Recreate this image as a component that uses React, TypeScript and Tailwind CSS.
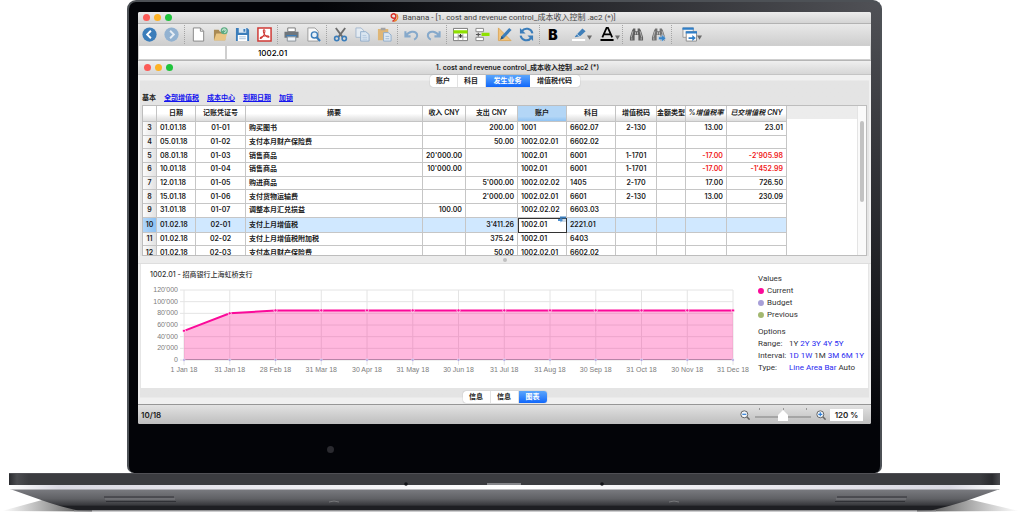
import React from 'react';

type Row = {
  no: number;
  date: string;
  doc: string;
  text: string;
  income?: string;
  expense?: string;
  account: string;
  category: string;
  vat?: string;
  rate?: string;
  posted?: string;
};

const rows: Row[] = [
  { no: 3, date: '01.01.18', doc: '01-01', text: '购买图书', expense: '200.00', account: '1001', category: '6602.07', vat: '2-130', rate: '13.00', posted: '23.01' },
  { no: 4, date: '05.01.18', doc: '01-02', text: '支付本月财产保险费', expense: '50.00', account: '1002.02.01', category: '6602.02' },
  { no: 5, date: '08.01.18', doc: '01-03', text: '销售商品', income: "20'000.00", account: '1002.01', category: '6001', vat: '1-1701', rate: '-17.00', posted: "-2'905.98" },
  { no: 6, date: '10.01.18', doc: '01-04', text: '销售商品', income: "10'000.00", account: '1002.01', category: '6001', vat: '1-1701', rate: '-17.00', posted: "-1'452.99" },
  { no: 7, date: '12.01.18', doc: '01-05', text: '购进商品', expense: "5'000.00", account: '1002.02.02', category: '1405', vat: '2-170', rate: '17.00', posted: '726.50' },
  { no: 8, date: '15.01.18', doc: '01-06', text: '支付货物运输费', expense: "2'000.00", account: '1002.02.01', category: '6601', vat: '2-130', rate: '13.00', posted: '230.09' },
  { no: 9, date: '31.01.18', doc: '01-07', text: '调整本月汇兑损益', income: '100.00', account: '1002.02.02', category: '6603.03' },
  { no: 10, date: '01.02.18', doc: '02-01', text: '支付上月增值税', expense: "3'411.26", account: '1002.01', category: '2221.01' },
  { no: 11, date: '01.02.18', doc: '02-02', text: '支付上月增值税附加税', expense: '375.24', account: '1002.01', category: '6403' },
  { no: 12, date: '01.02.18', doc: '02-03', text: '支付本月财产保险费', expense: '50.00', account: '1002.02.01', category: '6602.02' },
];

function Icon({ children }: { children: React.ReactNode }) {
  return (
    <svg viewBox="0 0 16 16" className="h-[15px] w-[15px] shrink-0" fill="none" aria-hidden="true">
      {children}
    </svg>
  );
}

function Tool({ label, children }: { label: string; children: React.ReactNode }) {
  return (
    <button type="button" aria-label={label} className="flex w-[22px] shrink-0 items-center justify-center">
      <Icon>{children}</Icon>
    </button>
  );
}

function MenuTool({ label, children }: { label: string; children: React.ReactNode }) {
  return (
    <button type="button" aria-label={label} className="flex w-[28px] shrink-0 items-center justify-end">
      <Icon>{children}</Icon>
      <svg viewBox="0 0 5 5" className="mt-[6px] h-[5px] w-[5px]" aria-hidden="true">
        <path d="M0 .5h5L2.500 4.800z" fill="#6b6b6b" />
      </svg>
    </button>
  );
}

function Separator() {
  return (
    <span className="flex w-[5px] shrink-0 justify-center py-px">
      <span className="border-l border-dotted border-[#a4a4a4]" />
    </span>
  );
}

function Lights() {
  return (
    <div className="flex flex-1 gap-[4px] pl-[5px]">
      <span className="h-[7px] w-[7px] rounded-full bg-[#fc5b57]" />
      <span className="h-[7px] w-[7px] rounded-full bg-[#fdb225]" />
      <span className="h-[7px] w-[7px] rounded-full bg-[#1fc43c]" />
    </div>
  );
}

const binoculars = (
  <>
    <path d="M4.500 1.500h2.300v3h2.400v-3h2.300l1.200 2.200 2.300 7.300v3.500h-5V8.500H6v6H1V11l2.300-7.300z" fill="#5f5f5f" />
    <path d="M4.200 4.500L2.500 11M11.800 4.500l1.700 6.500M3 11.200v2.500M13 11.200v2.500" stroke="#c9c9c9" strokeWidth=".8" />
    <path d="M7 5.500v2.500M9 5.500v2.500" stroke="#dcdcdc" strokeWidth=".8" />
  </>
);

function Toolbar() {
  return (
    <div className="flex h-[21px] items-stretch overflow-hidden bg-linear-to-b from-[#e9e9e9] to-[#cecece]">
      <Tool label="Back">
        <circle cx="8" cy="8" r="7.600" fill="#3b7dba" />
        <path d="M9.500 4L5.500 8l4 4" stroke="#fff" strokeWidth="2" />
      </Tool>
      <Tool label="Forward">
        <circle cx="8" cy="8" r="7.600" fill="#92b2d1" />
        <path d="M6.500 4l4 4-4 4" stroke="#e6edf4" strokeWidth="2" />
      </Tool>
      <Separator />
      <Tool label="New">
        <path d="M2.500 1h7.500l3.500 3.500V15h-11z" fill="#fff" stroke="#858585" />
        <path d="M10 1v3.500h3.500" stroke="#858585" />
      </Tool>
      <Tool label="Open">
        <path d="M1 14V3h5l1.500 2H13v9z" fill="#a98a55" />
        <path d="M1 14.500L3.500 7H15l-2 7.500z" fill="#e9c583" />
        <circle cx="12" cy="4" r="3.800" fill="#5cab82" />
        <path d="M10 4a2 2 0 1 1 2 2M12 4V2.500" stroke="#dff3e8" />
      </Tool>
      <Tool label="Save">
        <path d="M1 1h12l2 2v12H1z" fill="#3b7dba" />
        <path d="M4 1h8v5H4z" fill="#dbe7f2" />
        <path d="M9 2h2v3H9z" fill="#3b7dba" />
        <path d="M3 8.500h10V15H3z" fill="#fff" />
        <path d="M4.500 10.500h7M4.500 12.500h7" stroke="#9fbedb" />
      </Tool>
      <Tool label="PDF">
        <path d="M1 1h14v14H1z" fill="#fff" stroke="#cf3a36" strokeWidth="1.600" />
        <path d="M7.500 3c1.800 0 .8 4-.9 6.500C5.200 11.800 3.500 13 3.300 12c-.2-1.400 4.200-2.700 7.200-2.600 2.800.1 2.900 1.900 1.300 1.600C9.500 10.500 6.500 6.500 6.700 4c0-.6.300-1 .8-1z" stroke="#cf3a36" strokeWidth="1.100" />
      </Tool>
      <Separator />
      <Tool label="Print">
        <path d="M4 1h8v4H4z" fill="#fff" stroke="#777" />
        <path d="M.5 5h15v6.500H.5z" fill="#6f757b" />
        <path d="M2.500 8.500h11v2h-11z" fill="#3b7dba" />
        <path d="M3.500 10.500h9V15h-9z" fill="#eef3f8" stroke="#8b9299" />
      </Tool>
      <Tool label="Preview">
        <path d="M2 1h7.500L13 4.500V15H2z" fill="#f8f8f8" stroke="#9b9b9b" />
        <circle cx="9" cy="8.500" r="3.300" fill="#e8f1f9" stroke="#3b7dba" strokeWidth="1.500" />
        <path d="M11.300 11l3.700 4" stroke="#3b7dba" strokeWidth="2.200" />
      </Tool>
      <Separator />
      <Tool label="Cut">
        <path d="M3 1l7.500 10M13 1L5.500 11" stroke="#6d6d6d" strokeWidth="2" />
        <circle cx="4" cy="12.300" r="2.300" stroke="#3b7dba" strokeWidth="1.700" />
        <circle cx="12" cy="12.300" r="2.300" stroke="#3b7dba" strokeWidth="1.700" />
      </Tool>
      <Tool label="Copy">
        <path d="M1 1h5.500L9 3.500V11H1z" fill="#e4ebf2" stroke="#a3b8cd" />
        <path d="M6 5h5.500L15 8v7H6z" fill="#dbe6f1" stroke="#8fadcb" />
        <path d="M8 9h4M8 11h5M8 13h5" stroke="#a9c2da" strokeWidth=".8" />
      </Tool>
      <Tool label="Paste">
        <path d="M1 2h11v12H1z" fill="#dfb676" />
        <path d="M4 .8h5v2.700H4z" fill="#a3a3a3" />
        <path d="M7 6h5l3 2.500V15H7z" fill="#dfe9f3" stroke="#8fadcb" />
        <path d="M9 10h4M9 12.500h4" stroke="#8fadcb" strokeWidth=".8" />
      </Tool>
      <Separator />
      <Tool label="Undo">
        <path d="M1.500 4.500V10H7M2 9.500c3-5 10-6 11.800-2 .8 2.500-.8 5-3 6" stroke="#86a9cb" strokeWidth="2.200" />
      </Tool>
      <Tool label="Redo">
        <path d="M14.500 4.500V10H9M14 9.500c-3-5-10-6-11.800-2-.8 2.500.8 5 3 6" stroke="#86a9cb" strokeWidth="2.200" />
      </Tool>
      <Separator />
      <Tool label="Insert row">
        <path d="M.5 1.500h15v13H.5z" fill="#fff" stroke="#777" />
        <path d="M.5 3.500h15V7H.5z" fill="#8ee000" />
        <path d="M.5 10.800h15M5.500 7v7.500M10.500 7v7.500" stroke="#999" strokeWidth=".8" />
        <path d="M8 7.500v4M6 9.500h4" stroke="#333" strokeWidth="1.300" />
      </Tool>
      <Tool label="Append row">
        <path d="M1 1.500h8v3.500H1zM1 11h8v3.500H1z" fill="#fff" stroke="#888" />
        <path d="M7 6h8.500v3.500H7z" fill="#8ee000" />
        <path d="M1 8h5M3.500 6v4" stroke="#555" strokeWidth="1.200" />
      </Tool>
      <Tool label="Check">
        <path d="M1.500 1v13.500H15z" fill="#efc37e" stroke="#dca75a" />
        <path d="M4 13l1-3.500L13 1l2.500 2.300-8 8.500z" fill="#3b7dba" />
        <path d="M3.500 13.500l1.300-3.800 2.400 2.200z" fill="#23527e" />
      </Tool>
      <Tool label="Recalculate">
        <path d="M14.300 6.800A6.300 6.300 0 0 0 3 4.500M1.700 9.200A6.300 6.300 0 0 0 13 11.500" stroke="#3b7dba" strokeWidth="2.200" />
        <path d="M1 1V7H7zM15 15V9H9z" fill="#3b7dba" />
      </Tool>
      <Separator />
      <button type="button" className="w-[22px] shrink-0 text-center text-[14px] leading-[21px] font-black text-black">B</button>
      <MenuTool label="Highlight colour">
        <path d="M3 10.500l2.500-3L11 1.500l3.500 3L9 9.500l-5.500 1.500z" fill="#3f7fb9" />
        <path d="M5 7.500l3.500 2.800" stroke="#bcd2e6" />
        <path d="M0 12.700h14V15H0z" fill="#fff" />
      </MenuTool>
      <MenuTool label="Text colour">
        <path d="M2.500 11L7 1h1.500L13 11M4.500 7.800h6.500" stroke="#000" strokeWidth="1.900" />
        <path d="M.5 12.800h14V15H.5z" fill="#000" />
      </MenuTool>
      <Separator />
      <Tool label="Find">{binoculars}</Tool>
      <Tool label="Find next">
        <g opacity=".85">{binoculars}</g>
        <path d="M8 10.500h3.500V8l4.500 4-4.500 4v-2.500H8z" fill="#3c86c8" stroke="#e8f1f9" strokeWidth=".5" />
      </Tool>
      <Separator />
      <MenuTool label="Windows">
        <path d="M1 1h11v10H1z" fill="#f4f4f4" stroke="#9a9a9a" />
        <path d="M.5 .5h12v2.500H.5z" fill="#2f7fc9" />
        <path d="M4.500 5h11v10h-11z" fill="#fff" stroke="#8a8a8a" />
        <path d="M4 4.500h12V7H4z" fill="#2f7fc9" />
        <path d="M7 10.800h4V8.600l3.700 3.200-3.700 3.200v-2.200H7z" fill="#2f7fc9" />
      </MenuTool>
    </div>
  );
}

function Tabs({ items, active }: { items: { label: string; width: string }[]; active: number }) {
  return (
    <div role="tablist" className="flex h-[12px] overflow-hidden rounded-[3px] bg-white shadow-[0_0_1px_#888]">
      {items.map((t, i) => (
        <button
          key={i}
          type="button"
          role="tab"
          aria-selected={i === active}
          className={
            t.width +
            ' text-[7px] leading-[12px] font-bold ' +
            (i === active
              ? 'bg-linear-to-b from-[#5aa5fb] to-[#0f66fa] text-white'
              : 'border-r border-[#e2e2e2] text-[#222] last:border-r-0')
          }
        >
          {t.label}
        </button>
      ))}
    </div>
  );
}

const head =
  'border-r border-b border-[#c4c4c4] bg-linear-to-b from-white from-50% to-[#dcdcdc] p-0 pb-[2px] text-center font-semibold';
const cell = 'border-r border-b border-[#c6c6c6] p-0 px-[3px] ';

function Ledger() {
  return (
    <div className="mx-[2px] flex h-[151px] overflow-hidden border border-[#bdbdbd] bg-white">
      <div className="h-[154px] min-w-0 flex-1">
        <table className="h-[154px] w-full table-fixed border-separate border-spacing-0 text-[7px] leading-[12px] font-semibold whitespace-nowrap text-[#1a1a1a]">
          <colgroup>
            <col className="w-[14px]" />
            <col className="w-[39px]" />
            <col className="w-[50px]" />
            <col className="w-[177px]" />
            <col className="w-[43px]" />
            <col className="w-[52px]" />
            <col className="w-[49px]" />
            <col className="w-[49px]" />
            <col className="w-[41px]" />
            <col className="w-[29px]" />
            <col className="w-[41px]" />
            <col className="w-[60px]" />
            <col />
          </colgroup>
          <thead>
            <tr className="h-[16px]">
              <th className={head} aria-label="#" />
              <th className={head}>日期</th>
              <th className={head}>记账凭证号</th>
              <th className={head}>摘要</th>
              <th className={head}>收入 CNY</th>
              <th className={head}>支出 CNY</th>
              <th className="border-r border-b border-[#c4c4c4] bg-linear-to-b from-[#b3d6f6] from-70% to-[#8fc3f3] p-0 pb-[2px] text-center font-semibold">账户</th>
              <th className={head}>科目</th>
              <th className={head}>增值税码</th>
              <th className={head}>金额类型</th>
              <th className={head + ' italic'}>%增值税率</th>
              <th className={head + ' italic'}>已交增值税 CNY</th>
              <th className="bg-linear-to-b from-[#ececec] from-80% to-white to-80% p-0" aria-label="Filler" />
            </tr>
          </thead>
          <tbody>
            {rows.map((r) => {
              const sel = r.no === 10;
              const red = r.rate?.startsWith('-') ? 'text-[#f01818] ' : '';
              return (
                <tr key={r.no} className={sel ? 'bg-[#d0e8ff]' : ''}>
                  <th
                    scope="row"
                    className={
                      cell +
                      'text-center font-semibold ' +
                      (sel ? 'bg-linear-to-r from-[#b0d5f8] to-[#8cc2f4]' : 'bg-linear-to-r from-[#fbfbfb] to-[#e2e2e2]')
                    }
                  >
                    <span className="-mx-[3px] block">{r.no}</span>
                  </th>
                  <td className={cell}>{r.date}</td>
                  <td className={cell + 'text-center'}>{r.doc}</td>
                  <td className={cell}>{r.text}</td>
                  <td className={cell + 'text-right'}>{r.income}</td>
                  <td className={cell + 'text-right'}>{r.expense}</td>
                  <td className={sel ? 'relative border border-[#333] bg-white p-0 px-[2px]' : cell}>
                    {r.account}
                    {sel && (
                      <svg viewBox="0 0 8 7" className="absolute -top-[3px] right-0 h-[7px] w-[8px]" aria-hidden="true">
                        <path d="M2 .5h6v2H2z" fill="#3b7dba" />
                        <path d="M4 3h4v3H4z" fill="#cfdbe6" />
                        <path d="M0 3h2.500V1.500L5 4 2.500 6.500V5H0z" fill="#4b8fd0" />
                      </svg>
                    )}
                  </td>
                  <td className={cell}>{r.category}</td>
                  <td className={cell + 'text-center'}>{r.vat}</td>
                  <td className={cell} />
                  <td className={cell + red + 'text-right'}>{r.rate}</td>
                  <td className={cell + red + 'text-right'}>{r.posted}</td>
                  <td className="bg-white p-0" />
                </tr>
              );
            })}
          </tbody>
        </table>
      </div>
      <div className="w-[9px] shrink-0 border-l border-[#e4e4e4] bg-[#fafafa] px-[2px] pt-[15px]">
        <div className="h-[81px] rounded-full bg-[#c2c2c2]" />
      </div>
    </div>
  );
}

const months = ['1 Jan 18', '31 Jan 18', '28 Feb 18', '31 Mar 18', '30 Apr 18', '31 May 18', '30 Jun 18', '31 Jul 18', '31 Aug 18', '30 Sep 18', '31 Oct 18', '30 Nov 18', '31 Dec 18'];
const values = [50, 80, 85, 85, 85, 85, 85, 85, 85, 85, 85, 85, 85];
const ticks = ["0", "20'000", "40'000", "60'000", "80'000", "100'000", "120'000"];
const px = (i: number) => 43 + (i * 549) / 12;
const py = (v: number) => 80 - (v * 70) / 120;
const line = values.map((v, i) => `${px(i)},${py(v)}`).join(' ');

function Chart() {
  return (
    <svg viewBox="0 0 609 104" className="block w-full overflow-visible" role="img" aria-label="Account balance">
      <g stroke="#e4e4e4" strokeWidth="1">
        {ticks.map((t, i) => (
          <line key={t} x1="39" x2="592" y1={py(i * 20)} y2={py(i * 20)} />
        ))}
        {months.map((m, i) => (
          <line key={m} x1={px(i)} x2={px(i)} y1="10" y2="85" />
        ))}
      </g>
      <polygon points={`43,80 ${line} 592,80`} fill="#ff1493" fillOpacity=".3" />
      <line x1="43" x2="592" y1="79.500" y2="79.500" stroke="#b884a8" strokeWidth="1.200" />
      <polyline points={line} fill="none" stroke="#fb0a9a" strokeWidth="2" />
      {values.map((v, i) => (
        <g key={i}>
          <circle cx={px(i)} cy={py(v)} r="1.600" fill="#fb0a9a" stroke="#fff" strokeWidth=".7" />
          <circle cx={px(i)} cy="80" r="1.200" fill="#a49ae0" stroke="#fff" strokeWidth=".4" />
        </g>
      ))}
      <g fill="#7c7c7c" fontFamily="Liberation Sans, sans-serif" fontSize="7">
        {ticks.map((t, i) => (
          <text key={t} x="37" y={py(i * 20) + 2} textAnchor="end">{t}</text>
        ))}
        {months.map((m, i) => (
          <text key={m} x={px(i)} y="92" textAnchor="middle">{m}</text>
        ))}
      </g>
    </svg>
  );
}

function Option({ label, items, current }: { label: string; items: string[]; current: string }) {
  return (
    <div className="flex">
      <span className="w-[31px] shrink-0">{label}</span>
      <span className="flex gap-[2px]">
        {items.map((o) =>
          o === current ? (
            <span key={o}>{o}</span>
          ) : (
            <a key={o} href="#chart" className="text-[#2a2af0]">{o}</a>
          ),
        )}
      </span>
    </div>
  );
}

function Legend({ color, name }: { color: string; name: string }) {
  return (
    <div className="flex items-center gap-[3px]">
      <span className={'h-[6px] w-[6px] rounded-full ' + color} />
      {name}
    </div>
  );
}

function Glass({ plus }: { plus?: boolean }) {
  return (
    <svg viewBox="0 0 10 10" className="h-[10px] w-[10px]" fill="none" aria-hidden="true">
      <circle cx="4.300" cy="4.300" r="3.500" fill="#f2f6fa" stroke="#666" />
      <path d="M6.800 6.800l2.800 2.800" stroke="#666" strokeWidth="1.500" />
      <path d={plus ? 'M2.300 4.300h4M4.300 2.300v4' : 'M2.300 4.300h4'} stroke="#2f7fd6" strokeWidth="1.200" />
    </svg>
  );
}

function Base() {
  return (
    <svg viewBox="0 0 1022 41" preserveAspectRatio="none" className="block h-[41px] w-full" aria-hidden="true">
      <defs>
        <linearGradient id="under" x1="0" y1="0" x2="0" y2="1">
          <stop offset="0" stopColor="#7b7c81" />
          <stop offset=".45" stopColor="#606165" />
          <stop offset=".75" stopColor="#37383c" />
          <stop offset=".8" stopColor="#1e1f23" />
          <stop offset="1" stopColor="#1e1f23" />
        </linearGradient>
        <linearGradient id="stripe">
          <stop offset="0" stopColor="#fff" />
          <stop offset=".05" stopColor="#d9d8e2" />
          <stop offset=".5" stopColor="#fff" />
          <stop offset=".95" stopColor="#d9d8e2" />
          <stop offset="1" stopColor="#fff" />
        </linearGradient>
        <linearGradient id="deck">
          <stop offset="0" stopColor="#2a2b2f" />
          <stop offset=".008" stopColor="#4b4c50" />
          <stop offset=".02" stopColor="#3b3c40" />
          <stop offset=".98" stopColor="#3b3c40" />
          <stop offset=".992" stopColor="#2a2b2f" />
          <stop offset="1" stopColor="#4b4c50" />
        </linearGradient>
        <linearGradient id="shadeL">
          <stop offset="0" stopColor="#555" stopOpacity="0" />
          <stop offset="1" stopColor="#333" stopOpacity=".95" />
        </linearGradient>
        <linearGradient id="shadeR" x1="1" x2="0">
          <stop offset="0" stopColor="#555" stopOpacity="0" />
          <stop offset="1" stopColor="#333" stopOpacity=".95" />
        </linearGradient>
      </defs>
      <path d="M2 38L42 27l50 3v8.500z" fill="url(#shadeL)" />
      <path d="M1019 38L972 27l-55 3v8.500z" fill="url(#shadeR)" />
      <path d="M10 16L44 28Q58 33 78 37.500H931Q950 33 966 28L1000 16z" fill="url(#under)" />
      <path d="M74 38h862" stroke="#9a9a9d" />
      <path d="M9 0H1000V12H9z" fill="url(#deck)" />
      <path d="M9 .5H1000" stroke="#55565a" strokeWidth=".8" />
      <path d="M9 12H1000V15L998 16.500H11L9 15z" fill="url(#stripe)" />
      <path d="M487 10h34v2h-34z" fill="#85868a" />
      <circle cx="406" cy="11" r="1.800" fill="#111216" />
      <circle cx="602" cy="11" r="1.800" fill="#111216" />
      <path d="M104 24h70M106 28.500h70M837 24h70M835 28.500h70" stroke="#303136" strokeWidth="1.200" />
      <path d="M105 26h70M836 26h70" stroke="#85868b" strokeWidth=".8" />
      <path d="M329 29q5-2 10 0M669 29q5-2 10 0" stroke="#77777a" fill="none" />
    </svg>
  );
}

export default function App() {
  return (
    <main className="w-full bg-white font-['Inter','Noto_Sans_CJK_SC',sans-serif] text-[7px]">
      <div className="pr-[140px] pl-[127px]">
        <div className="rounded-t-[9px] rounded-b-[7px] border-x-2 border-t-2 border-[#4d5156] bg-[radial-gradient(ellipse_75%_90%_at_100%_0%,#505156,#030408)] px-[9px] pt-[10px]">
          <div className="overflow-hidden rounded-[2px] bg-[#f0f0f0]">
            <header className="flex h-[12px] items-center border-b border-[#b2b2b2] bg-linear-to-b from-[#ececec] to-[#d4d4d4]">
              <Lights />
              <div className="flex items-center gap-[3px] font-['Roboto','Noto_Sans_CJK_SC',sans-serif] text-[8px] leading-[11px] whitespace-nowrap text-[#444]">
                <svg viewBox="0 0 9 9" className="h-[9px] w-[9px]" fill="none" aria-hidden="true">
                  <path d="M5.500 4.500C4 6 1.200 5 1.200 3S4 0 5.300 1.500 5.500 7 2.500 8.500" stroke="#d8342c" strokeWidth="1.500" />
                  <path d="M6.500 1c2.500 3 1 6.500-2.500 7.300" stroke="#e8862c" strokeWidth="1.200" />
                </svg>
                Banana - [1. cost and revenue control_成本收入控制 .ac2 (*)]
              </div>
              <div className="flex-1 pr-[8px]" />
            </header>
            <Toolbar />
            <div className="flex h-[16px] gap-[2px] border-b border-[#b5b5b5] bg-[#cfcfcf] px-px pt-px pb-px">
              <input aria-label="Cell name" className="w-[86px] shrink-0 bg-white" />
              <input aria-label="Cell value" defaultValue="1002.01" className="min-w-0 flex-1 bg-white pl-[31px] text-[8px] font-medium text-black" />
            </div>
            <div className="flex h-[14px] items-center border-b border-[#c4c4c4] bg-linear-to-b from-[#efefef] to-[#d6d6d6] pl-px">
              <Lights />
              <h1 className="pl-[20px] text-[7px] leading-[12px] font-semibold whitespace-nowrap text-[#1c1c1c]">
                1. cost and revenue control_成本收入控制 .ac2 (*)
              </h1>
              <div className="flex-1" />
            </div>
            <section className="mx-[2px] bg-linear-to-b from-[#f0f0f0] from-[5px] to-[#e4e4e4] to-[6px]">
              <div className="flex h-[12px] justify-center">
                <Tabs
                  active={2}
                  items={[
                    { label: '账户', width: 'w-[28px]' },
                    { label: '科目', width: 'w-[28px]' },
                    { label: '发生业务', width: 'w-[44px]' },
                    { label: '增值税代码', width: 'w-[50px]' },
                  ]}
                />
              </div>
              <nav className="flex h-[18px] items-center gap-[8px] pt-[4px] pl-[2px] font-semibold">
                <span className="text-[#222]">基本</span>
                <a href="#vat" className="text-[#1414ee] underline">全部增值税</a>
                <a href="#centres" className="text-[#1414ee] underline">成本中心</a>
                <a href="#due" className="text-[#1414ee] underline">到期日期</a>
                <a href="#lock" className="text-[#1414ee] underline">加锁</a>
              </nav>
              <Ledger />
            </section>
            <div className="flex h-[8px] items-center justify-center border-b border-[#dedede] bg-[#ececec]">
              <span className="h-[4px] w-[4px] rounded-full bg-[#c0c0c0]" />
            </div>
            <section id="chart" className="mx-[2px] flex min-h-[124px] border-x border-[#e6e6e6] bg-white text-[#333]">
              <div className="min-w-0 flex-1 pt-[6px]">
                <h2 className="pl-[9px] text-[7px] leading-[10px] font-medium">1002.01 - 招商银行上海虹桥支行</h2>
                <Chart />
              </div>
              <div className="w-[118px] shrink-0 pt-[9px] pl-[8px] font-['Roboto',sans-serif] text-[8px] leading-[12px] whitespace-nowrap">
                <div>Values</div>
                <Legend color="bg-[#fb0a9a]" name="Current" />
                <Legend color="bg-[#a79fd8]" name="Budget" />
                <Legend color="bg-[#a3b870]" name="Previous" />
                <div className="mt-[5px]">Options</div>
                <Option label="Range:" items={['1Y', '2Y', '3Y', '4Y', '5Y']} current="1Y" />
                <Option label="Interval:" items={['1D', '1W', '1M', '3M', '6M', '1Y']} current="1M" />
                <Option label="Type:" items={['Line', 'Area', 'Bar', 'Auto']} current="Auto" />
              </div>
            </section>
            <div className="mx-[2px] flex h-[16px] justify-center bg-linear-to-b from-[#e4e4e4] from-[9px] to-[#f0f0f0] to-[10px] pt-[3px]">
              <Tabs
                active={2}
                items={[
                  { label: '信息', width: 'w-[28px]' },
                  { label: '信息', width: 'w-[28px]' },
                  { label: '图表', width: 'w-[28px]' },
                ]}
              />
            </div>
            <footer className="flex h-[20px] items-center border-t border-[#969696] bg-linear-to-b from-[#e2e2e2] to-[#bebebe] pr-[8px] pl-[3px] text-[8px] font-semibold text-[#1c1c1c]">
              <span className="flex-1">10/18</span>
              <button type="button" aria-label="Zoom out"><Glass /></button>
              <div className="mx-[5px] flex w-[56px] flex-col">
                <div className="flex justify-between px-[4px]">
                  <span className="h-[2px] w-px bg-[#999]" />
                  <span className="h-[2px] w-px bg-[#999]" />
                  <span className="h-[2px] w-px bg-[#999]" />
                </div>
                <input
                  type="range"
                  aria-label="Zoom"
                  defaultValue={50}
                  className="h-[11px] w-full appearance-none bg-[linear-gradient(transparent_6px,#a5a5a5_6px,#a5a5a5_8px,transparent_8px)] [&::-webkit-slider-thumb]:h-[11px] [&::-webkit-slider-thumb]:w-[10px] [&::-webkit-slider-thumb]:appearance-none [&::-webkit-slider-thumb]:bg-white [&::-webkit-slider-thumb]:[clip-path:polygon(50%_0,100%_45%,100%_100%,0_100%,0_45%)]"
                />
              </div>
              <button type="button" aria-label="Zoom in"><Glass plus /></button>
              <input aria-label="Zoom level" defaultValue="120 %" className="ml-[4px] h-[12px] w-[33px] bg-white text-center" />
            </footer>
          </div>
          <div className="h-[49px] pt-[22px] pl-[189px]">
            <span className="block h-[7px] w-[7px] rounded-full bg-[#2a2a2f]" />
          </div>
        </div>
      </div>
      <Base />
    </main>
  );
}
